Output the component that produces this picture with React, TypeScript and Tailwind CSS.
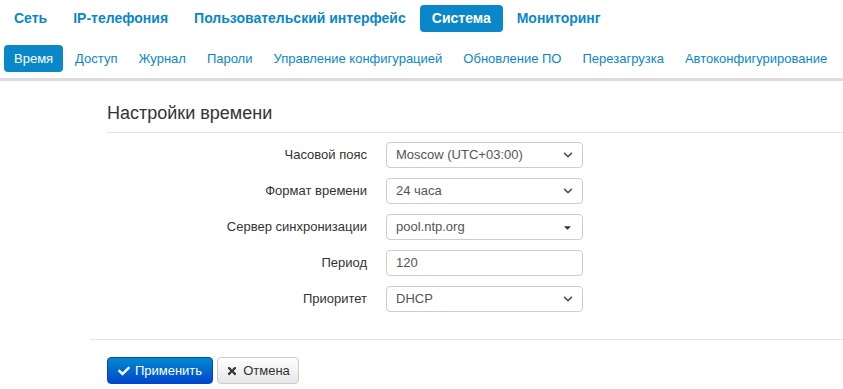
import { FaCheck, FaTimes, FaChevronDown, FaCaretDown } from 'react-icons/fa';

const TOP = ['Сеть', 'IP-телефония', 'Пользовательский интерфейс', 'Система', 'Мониторинг'];
const SUB = [
  'Время',
  'Доступ',
  'Журнал',
  'Пароли',
  'Управление конфигурацией',
  'Обновление ПО',
  'Перезагрузка',
  'Автоконфигурирование',
];

type Row = { label: string; value: string; kind: 'select' | 'combo' | 'input' };

const ROWS: Row[] = [
  { label: 'Часовой пояс', value: 'Moscow (UTC+03:00)', kind: 'select' },
  { label: 'Формат времени', value: '24 часа', kind: 'select' },
  { label: 'Сервер синхронизации', value: 'pool.ntp.org', kind: 'combo' },
  { label: 'Период', value: '120', kind: 'input' },
  { label: 'Приоритет', value: 'DHCP', kind: 'select' },
];

function Field({ row }: { row: Row }) {
  return (
    <div className="flex h-[26px] w-[197px] items-center justify-between rounded-[4px] border border-[#cccccc] bg-white pl-[9px] pr-[9px] text-[13px] text-[#555555]">
      <span>{row.value}</span>
      {row.kind === 'select' && <FaChevronDown className="text-[10px] text-[#555555]" />}
      {row.kind === 'combo' && <FaCaretDown className="text-[11px] text-[#333333]" />}
    </div>
  );
}

export default function App() {
  return (
    <div className="h-[389px] w-[843px] overflow-hidden bg-white font-['Liberation_Sans',Arial,sans-serif]">
      <nav className="mt-[5px] flex h-[27px] items-center whitespace-nowrap pl-[1px]">
        {TOP.map((t) => (
          <span
            key={t}
            className={
              t === 'Система'
                ? 'mx-[1px] flex h-[27px] shrink-0 items-center rounded-[4px] bg-[#0a87c9] px-[12px] text-[14px] font-bold text-white'
                : 'mx-[1px] flex h-[27px] shrink-0 items-center px-[12px] text-[14px] font-bold text-[#0a87c9]'
            }
          >
            {t}
          </span>
        ))}
      </nav>
      <nav className="mt-[13px] flex h-[27px] items-center whitespace-nowrap pl-[4px]">
        {SUB.map((t) => (
          <span
            key={t}
            className={
              t === 'Время'
                ? 'mr-[2px] flex h-[27px] shrink-0 items-center rounded-[4px] bg-[#0a87c9] px-[10px] text-[13px] text-white'
                : 'mr-[1px] flex h-[27px] shrink-0 items-center px-[10px] text-[13px] text-[#0a87c9]'
            }
          >
            {t}
          </span>
        ))}
      </nav>
      <div className="mt-[6px] h-[3px] bg-[#dcdcdc]" />

      <div className="pl-[90px]">
        <div className="pl-[17px]">
          <h2 className="mt-[21px] text-[18px] leading-[22px] text-[#333333]">Настройки времени</h2>
          <div className="mt-[8px] h-px bg-[#e5e5e5]" />
        </div>

        <div className="mt-[9px] flex flex-col gap-[10px] pl-[17px]">
          {ROWS.map((r) => (
            <div key={r.label} className="flex items-center">
              <label className="w-[261px] pr-px text-right text-[13px] text-[#333333]">{r.label}</label>
              <div className="ml-[18px]">
                <Field row={r} />
              </div>
            </div>
          ))}
        </div>

        <div className="mt-[27px] h-px bg-[#e5e5e5]" />

        <div className="mt-[17px] flex gap-[4px] pl-[17px]">
          <button
            type="button"
            className="flex h-[27px] w-[106px] items-center justify-center gap-[5px] rounded-[4px] border border-[#0044cc] bg-gradient-to-b from-[#0088cc] to-[#0044cc] text-[13px] text-white"
          >
            <FaCheck className="text-[12px]" />
            Применить
          </button>
          <button
            type="button"
            className="flex h-[27px] w-[82px] items-center justify-center gap-[5px] rounded-[4px] border border-[#cccccc] bg-gradient-to-b from-white to-[#e6e6e6] text-[13px] text-[#333333]"
          >
            <FaTimes className="text-[12px]" />
            Отмена
          </button>
        </div>
      </div>
    </div>
  );
}
